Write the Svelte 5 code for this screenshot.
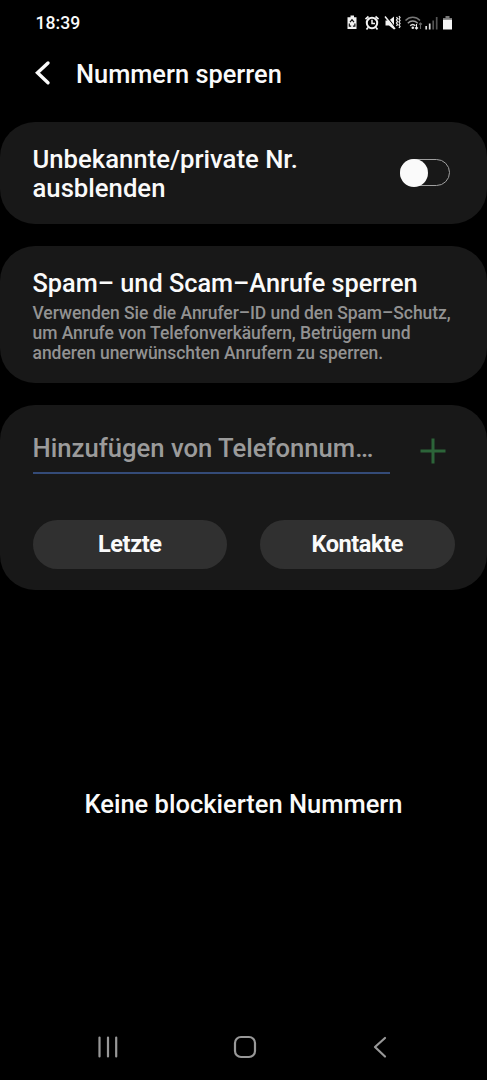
<script>
  // Blocked numbers settings screen
  let hideUnknown = $state(false);

  const sources = ['Letzte', 'Kontakte'];
</script>

<div class="screen">
  <div class="status">
    <span class="time">18:39</span>
    <svg class="status-icons" width="110" height="18" viewBox="0 0 110 18">
      <!-- battery saver -->
      <path d="M4.500 1.500h3.500v1.800h2.500v11.700H1.500V3.300H4.500z" fill="#f2f2f2" />
      <path d="M4 8.200L6 5.700l2 2.500M8.900 9.500v2.700H6.900M5.200 12.200H3.300V9.500" fill="none" stroke="#111" stroke-width="1.200" />
      <!-- alarm -->
      <circle cx="26" cy="9" r="5.200" fill="none" stroke="#f2f2f2" stroke-width="2" />
      <path d="M19.500 5.200l3-2.700M32.500 5.200l-3-2.700M22 13.500l-1.500 2M30 13.500l1.500 2" stroke="#f2f2f2" stroke-width="1.700" />
      <path d="M26 5.800V9.500h3" fill="none" stroke="#f2f2f2" stroke-width="1.500" />
      <!-- muted, vibrating -->
      <path d="M39.500 6.500h3.500l5-4v13l-5-4h-3.500z" fill="#f2f2f2" />
      <path d="M40.500 2l9 12" stroke="#000" stroke-width="1.200" />
      <path d="M39 2.500l10 12.500" stroke="#f2f2f2" stroke-width="1.500" />
      <path d="M50.500 3l1 1.500-1 1.500 1 1.500-1 1.500 1 1.500-1 1.500M53 2l1 1.500-1 1.500 1 1.500-1 1.500 1 1.500-1 1.500 1 1.500-1 1.500" fill="none" stroke="#e8e8e8" stroke-width="1.300" />
      <!-- wifi -->
      <path d="M59.500 6.500c4.200-4.200 10.300-4.200 14.500 0" fill="none" stroke="#777" stroke-width="1.500" />
      <path d="M61.800 9.200c2.900-2.900 7-2.900 9.900 0" fill="none" stroke="#999" stroke-width="1.500" />
      <path d="M64.200 11.700c1.500-1.500 3.600-1.500 5.100 0" fill="none" stroke="#ddd" stroke-width="1.500" />
      <circle cx="66.800" cy="13.800" r="1.300" fill="#eee" />
      <path d="M70.500 10v5M69 13.500l1.500 1.500 1.500-1.500" fill="none" stroke="#eee" stroke-width="1.100" />
      <path d="M74.500 15v-6M73 10.500l1.500-1.500 1.500 1.500" fill="none" stroke="#666" stroke-width="1.100" />
      <!-- signal -->
      <path d="M80.200 12v3.500M83.700 9.500v6" stroke="#ddd" stroke-width="1.700" />
      <path d="M87.200 6.500v9M90.700 3v12.500" stroke="#555" stroke-width="1.700" />
      <!-- battery -->
      <path d="M99.500 2h4v2h2.500v3H97V4h2.500z" fill="#777" />
      <path d="M97 5.800h9v9.700h-9z" fill="#f5f5f5" />
    </svg>
  </div>

  <header>
    <svg class="back" width="18" height="26" viewBox="0 0 18 26">
      <path d="M15 3L4.500 12.800 15 22.800" />
    </svg>
    <h1>Nummern sperren</h1>
  </header>

  <section class="card hide-card">
    <div class="title">Unbekannte/private Nr.<br />ausblenden</div>
    <button
      class="switch"
      class:on={hideUnknown}
      aria-label="Unbekannte/private Nr. ausblenden"
      onclick={() => (hideUnknown = !hideUnknown)}
    >
      <span class="knob"></span>
    </button>
  </section>

  <section class="card spam-card">
    <div class="title">Spam– und Scam–Anrufe sperren</div>
    <p>
      Verwenden Sie die Anrufer–ID und den Spam–Schutz,<br />
      um Anrufe von Telefonverkäufern, Betrügern und<br />
      anderen unerwünschten Anrufern zu sperren.
    </p>
  </section>

  <section class="card add-card">
    <div class="add-row">
      <div class="field">Hinzufügen von Telefonnum…</div>
      <svg class="plus" width="26" height="26" viewBox="0 0 26 26">
        <path d="M13 0.500v25M0.500 13h25" />
      </svg>
    </div>
    <div class="buttons">
      {#each sources as source}
        <button class="pill">{source}</button>
      {/each}
    </div>
  </section>

  <main>Keine blockierten Nummern</main>

  <nav>
    <svg width="24" height="24" viewBox="0 0 24 24">
      <path d="M2.500 2.500v19M11 2.500v19M19.200 2.500v19" />
    </svg>
    <svg width="24" height="24" viewBox="0 0 24 24">
      <rect x="2" y="2" width="20" height="20" rx="6" />
    </svg>
    <svg width="24" height="24" viewBox="0 0 24 24">
      <path d="M17 3L7 12l10 9.500" />
    </svg>
  </nav>
</div>

<style>
  :global(body) {
    background: #000;
  }

  .screen {
    display: flex;
    flex-direction: column;
    width: 487px;
    height: 1080px;
    overflow: hidden;
    box-sizing: border-box;
    background: #000;
    color: #fafafa;
    font-family: Roboto, sans-serif;
    font-weight: 500;
  }

  .status {
    display: flex;
    justify-content: space-between;
    align-items: center;
    height: 46px;
    padding: 0 31.5px 0 35.5px;
    box-sizing: border-box;
  }

  .time {
    font-size: 17.6px;
  }

  header {
    display: flex;
    align-items: center;
    height: 54px;
    padding-left: 33px;
    margin-bottom: 21.5px;
  }

  .back {
    fill: none;
    stroke: #fafafa;
    stroke-width: 3.4;
    stroke-linecap: round;
  }

  h1 {
    margin: 2px 0 0 25px;
    padding-top: 1px;
    font-size: 25.4px;
    font-weight: 500;
    line-height: 29px;
  }

  .card {
    box-sizing: border-box;
    flex: none;
    padding: 0 32.5px;
    border-radius: 35px;
    background: #181818;
  }

  .title {
    font-size: 25.3px;
    line-height: 29.5px;
    white-space: nowrap;
  }

  .hide-card {
    display: flex;
    justify-content: space-between;
    align-items: center;
    height: 102.5px;
    padding-right: 37px;
    margin-bottom: 22px;
  }

  .hide-card .title {
    padding-top: 3px;
    font-size: 25.7px;
  }

  .switch {
    display: flex;
    align-items: center;
    width: 50px;
    height: 27px;
    padding: 0;
    border: 1px solid #a0a0a0;
    border-radius: 14px;
    background: none;
  }

  .knob {
    flex: none;
    width: 28px;
    height: 28px;
    margin-left: -1px;
    border-radius: 50%;
    background: #fafafa;
  }

  .switch.on {
    justify-content: flex-end;
  }

  .spam-card {
    height: 137px;
    padding-top: 23px;
    margin-bottom: 22px;
  }

  p {
    margin: 4px 0 0;
    color: #929292;
    font-size: 17.5px;
    letter-spacing: -0.05px;
    line-height: 20.3px;
    white-space: nowrap;
  }

  .add-card {
    height: 185px;
  }

  .add-row {
    display: flex;
    justify-content: space-between;
    padding-right: 9px;
  }

  .field {
    box-sizing: border-box;
    width: 357px;
    height: 69px;
    padding-top: 28px;
    border-bottom: 2px solid #344b78;
    color: #9b9b9b;
    font-size: 25.65px;
    line-height: 30px;
    white-space: nowrap;
  }

  .plus {
    margin-top: 33px;
    fill: none;
    stroke: #2c6439;
    stroke-width: 3;
  }

  .buttons {
    display: flex;
    gap: 33px;
    margin-top: 46px;
  }

  .pill {
    flex: 1;
    height: 48.5px;
    padding: 0;
    border: 0;
    border-radius: 25px;
    background: #303030;
    color: #fafafa;
    font: 700 23.5px/49px Roboto, sans-serif;
    letter-spacing: -0.4px;
  }

  main {
    margin-top: 199px;
    font-size: 25.5px;
    line-height: 30px;
    text-align: center;
  }

  nav {
    display: flex;
    justify-content: space-between;
    margin-top: auto;
    padding: 0 95px 21px 97px;
  }

  nav svg {
    fill: none;
    stroke: #989898;
    stroke-width: 2.2;
    stroke-linecap: round;
    stroke-linejoin: round;
  }
</style>
